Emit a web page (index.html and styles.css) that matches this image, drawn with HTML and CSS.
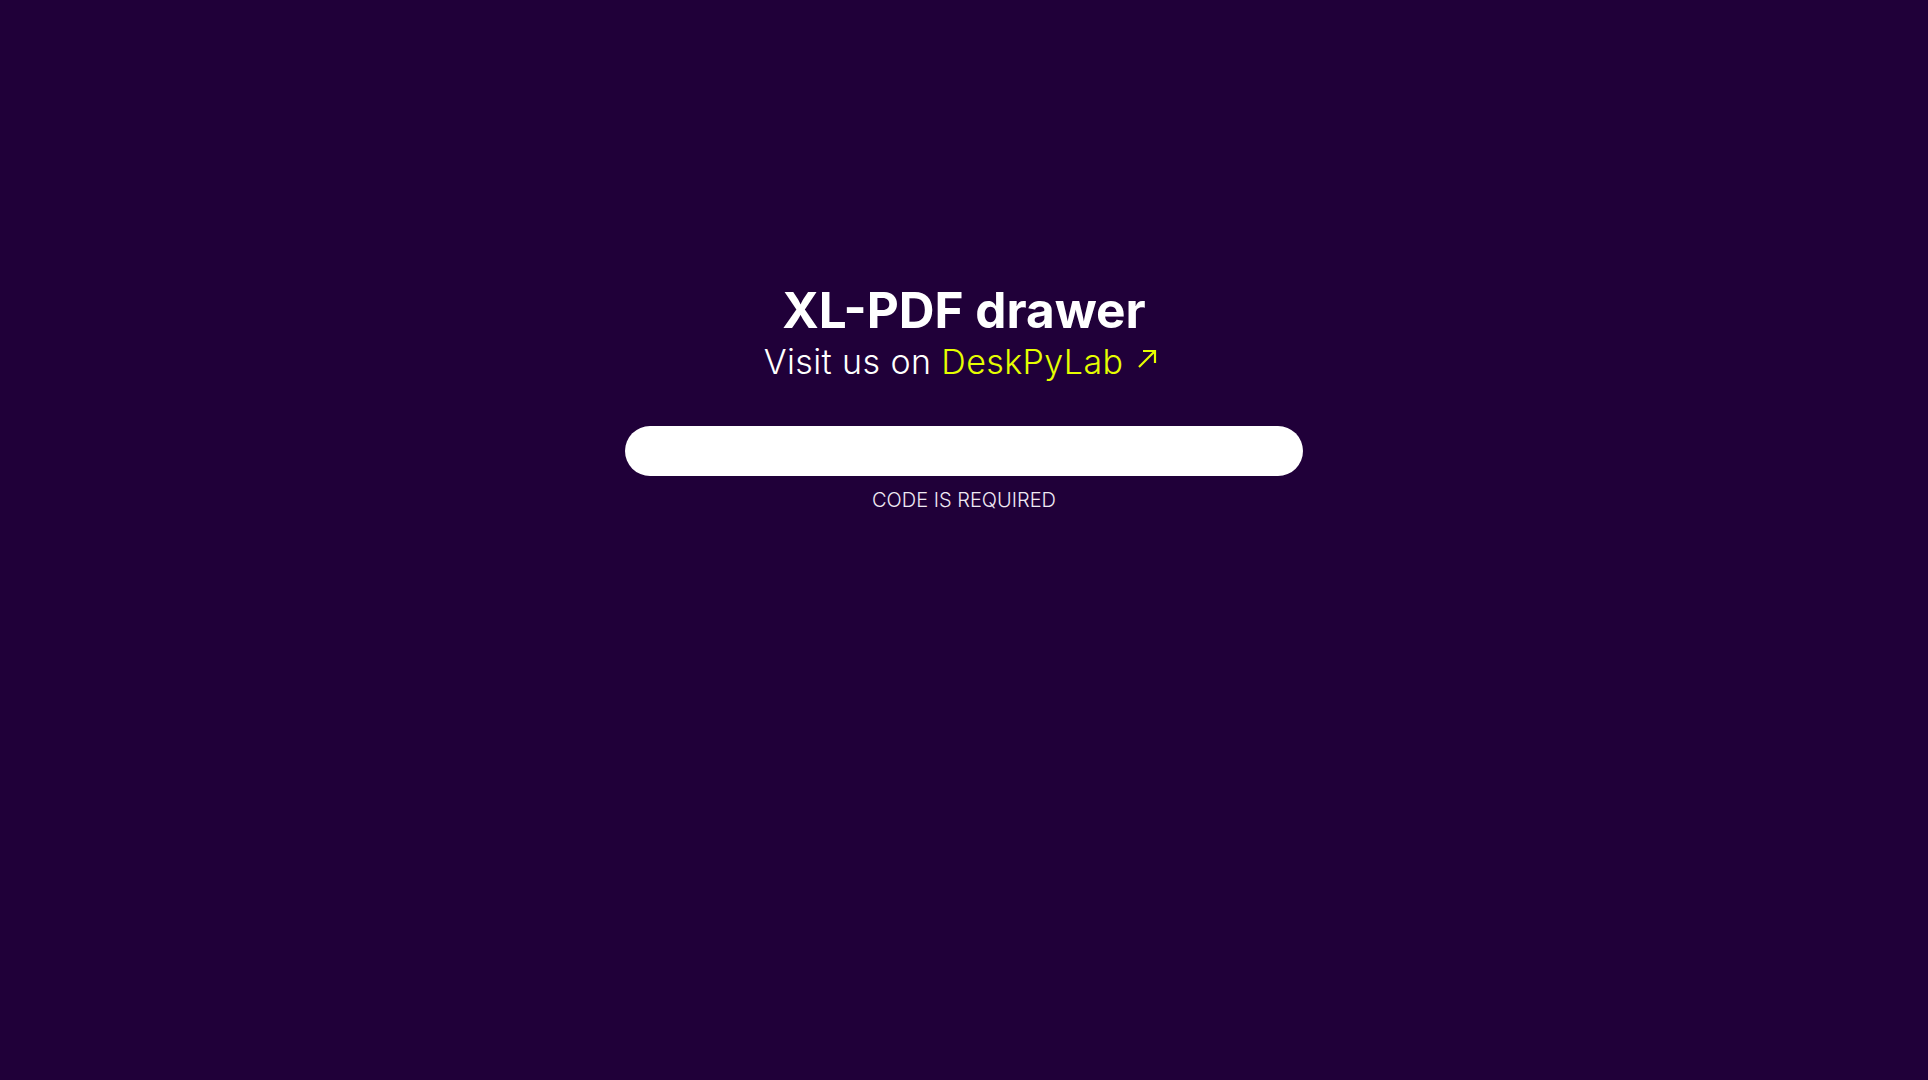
FILE: index.html
```html
<!DOCTYPE html>
<html lang="en">
<head>
<meta charset="utf-8">
<title>XL-PDF drawer</title>
<link rel="stylesheet" href="styles.css">
</head>
<body>
<main class="page">
  <h1 class="title">XL-PDF drawer</h1>
  <p class="subtitle">Visit us on <a class="link" href="#">DeskPyLab<svg class="arrow" viewBox="0 0 20 20" width="20" height="20" aria-hidden="true"><path d="M2 18 L18 2 M6 2 H18 V14" fill="none" stroke="currentColor" stroke-width="2.2"/></svg></a></p>
  <input class="code-input" type="text" aria-label="Code">
  <p class="error">CODE IS REQUIRED</p>
</main>
</body>
</html>
```
FILE: styles.css
```css
html, body {
  margin: 0;
  padding: 0;
  height: 100%;
}
body {
  background: #200039;
  font-family: Inter, "Noto Sans", sans-serif;
  color: #ffffff;
}
.page {
  display: flex;
  flex-direction: column;
  align-items: center;
  padding-top: 281px;
}
.title {
  margin: 0;
  font-size: 49.5px;
  line-height: 58px;
  font-weight: 700;
}
.subtitle {
  margin: 3px 0 0;
  font-size: 34px;
  line-height: 39px;
  font-weight: 300;
  letter-spacing: 0.4px;
}
.link {
  color: #e6ff00;
  text-decoration: none;
}
.arrow {
  width: 20px;
  height: 20px;
  margin-left: 14px;
  margin-right: 7px;
  vertical-align: 5px;
  color: #e6ff00;
}
.code-input {
  margin-top: 45px;
  width: 678px;
  height: 50px;
  box-sizing: border-box;
  border: none;
  border-radius: 25px;
  background: #ffffff;
  padding: 0 24px;
  font-family: Inter, sans-serif;
  font-size: 18px;
  outline: none;
}
.error {
  margin: 13px 0 0;
  font-size: 20px;
  line-height: 22px;
  font-weight: 300;
  color: #f0eaf4;
}
```
